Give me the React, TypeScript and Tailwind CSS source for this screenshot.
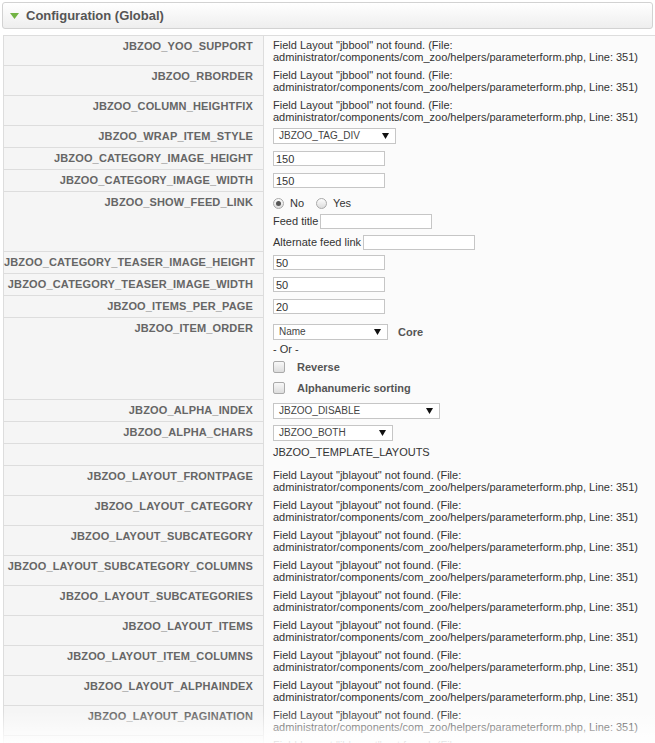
import type { ReactNode } from 'react';

const FILE_LINE = 'administrator/components/com_zoo/helpers/parameterform.php, Line: 351)';

const layoutRows = [
  'JBZOO_LAYOUT_FRONTPAGE',
  'JBZOO_LAYOUT_CATEGORY',
  'JBZOO_LAYOUT_SUBCATEGORY',
  'JBZOO_LAYOUT_SUBCATEGORY_COLUMNS',
  'JBZOO_LAYOUT_SUBCATEGORIES',
  'JBZOO_LAYOUT_ITEMS',
  'JBZOO_LAYOUT_ITEM_COLUMNS',
  'JBZOO_LAYOUT_ALPHAINDEX',
  'JBZOO_LAYOUT_PAGINATION',
  '',
];

function Missing({ field }: { field: string }) {
  return (
    <div className="whitespace-nowrap leading-[12px]">
      <div>Field Layout "{field}" not found. (File:</div>
      <div>{FILE_LINE}</div>
    </div>
  );
}

function Row({
  label,
  pad = 'pt-[3px] pb-[4px]',
  children,
}: {
  label: string;
  pad?: string;
  children?: ReactNode;
}) {
  return (
    <div className="flex">
      <div className="w-[260px] shrink-0 whitespace-nowrap border-r border-b border-[#dddddd] bg-[#f5f5f5] pt-[4px] pr-[10px] text-right text-[11px] font-bold leading-[12px] tracking-[0.15px] text-[#666666]">
        {label}
      </div>
      <div className={`min-w-0 flex-1 bg-[#fbfbfb] pl-[9px] ${pad}`}>{children}</div>
    </div>
  );
}

function Select({ value, width }: { value: string; width: string }) {
  return (
    <div
      className={`flex h-[16px] shrink-0 items-center justify-between border border-[#c6c6c6] bg-white pr-[6px] pl-[5px] text-[10px] leading-[12px] text-[#444444] ${width}`}
    >
      <span>{value}</span>
      <svg width="7" height="6" viewBox="0 0 7 6">
        <path d="M0 0h7L3.5 6z" fill="#111" />
      </svg>
    </div>
  );
}

function TextInput({ value = '', width = 'w-[112px]' }: { value?: string; width?: string }) {
  return (
    <input
      readOnly
      defaultValue={value}
      className={`block h-[15px] border border-[#c6c6c6] bg-white px-[2px] text-[11px] leading-[13px] text-[#333333] outline-none ${width}`}
    />
  );
}

function Radio({ checked, label }: { checked?: boolean; label: string }) {
  return (
    <span className="flex items-center">
      <span className="flex h-[11px] w-[11px] items-center justify-center rounded-full border border-[#a9a9a9] bg-linear-to-b from-[#fdfdfd] to-[#dcdcdc]">
        {checked && <span className="h-[5px] w-[5px] rounded-full bg-[#555555]" />}
      </span>
      <span className="ml-[6px]">{label}</span>
    </span>
  );
}

function Checkbox({ label }: { label: string }) {
  return (
    <div className="flex h-[12px] items-center">
      <span className="h-[12px] w-[12px] rounded-[2px] border border-[#aaaaaa] bg-linear-to-b from-[#f8f8f8] to-[#dddddd]" />
      <span className="ml-[12px] font-bold text-[#555555]">{label}</span>
    </div>
  );
}

export default function App() {
  return (
    <div className="relative h-[743px] w-[655px] overflow-hidden bg-white font-['Liberation_Sans',Arial,sans-serif] text-[11px] text-[#333333]">
      {/* panel header */}
      <div className="mx-[2px] mt-[2px] flex h-[27px] items-center rounded-[3px] border border-[#d2d2d2] bg-linear-to-b from-white to-[#eeeeee] pl-[7px]">
        <svg width="9" height="6" viewBox="0 0 9 6">
          <path d="M0 0h9L4.5 6z" fill="#72b343" />
        </svg>
        <span className="ml-[7px] text-[13px] font-bold text-[#555555]">Configuration (Global)</span>
      </div>

      {/* parameter table */}
      <div className="mt-[6px] ml-[3px] border-t border-l border-[#dddddd]">
        <Row label="JBZOO_YOO_SUPPORT" pad="pt-[3px] pb-[3px]">
          <Missing field="jbbool" />
        </Row>
        <Row label="JBZOO_RBORDER" pad="pt-[3px] pb-[3px]">
          <Missing field="jbbool" />
        </Row>
        <Row label="JBZOO_COLUMN_HEIGHTFIX" pad="pt-[3px] pb-[3px]">
          <Missing field="jbbool" />
        </Row>
        <Row label="JBZOO_WRAP_ITEM_STYLE" pad="pt-[2px] pb-[4px]">
          <Select value="JBZOO_TAG_DIV" width="w-[123px]" />
        </Row>
        <Row label="JBZOO_CATEGORY_IMAGE_HEIGHT">
          <TextInput value="150" />
        </Row>
        <Row label="JBZOO_CATEGORY_IMAGE_WIDTH">
          <TextInput value="150" />
        </Row>
        <Row label="JBZOO_SHOW_FEED_LINK" pad="pt-[3px] pb-[2px]">
          <div className="flex h-[16px] items-center gap-[12px]">
            <Radio checked label="No" />
            <Radio label="Yes" />
          </div>
          <div className="mt-[2px] flex h-[16px] items-center">
            <span>Feed title</span>
            <span className="ml-[2px]">
              <TextInput />
            </span>
          </div>
          <div className="mt-[5px] flex h-[16px] items-center">
            <span>Alternate feed link</span>
            <span className="ml-[2px]">
              <TextInput />
            </span>
          </div>
        </Row>
        <Row label="JBZOO_CATEGORY_TEASER_IMAGE_HEIGHT">
          <TextInput value="50" />
        </Row>
        <Row label="JBZOO_CATEGORY_TEASER_IMAGE_WIDTH">
          <TextInput value="50" />
        </Row>
        <Row label="JBZOO_ITEMS_PER_PAGE">
          <TextInput value="20" />
        </Row>
        <Row label="JBZOO_ITEM_ORDER" pad="pt-[6px] pb-[6px]">
          <div className="flex h-[16px] items-center">
            <Select value="Name" width="w-[115px]" />
            <span className="ml-[10px] font-bold text-[#555555]">Core</span>
          </div>
          <div className="mt-[3px] leading-[12px]">- Or -</div>
          <div className="mt-[6px]">
            <Checkbox label="Reverse" />
          </div>
          <div className="mt-[9px]">
            <Checkbox label="Alphanumeric sorting" />
          </div>
        </Row>
        <Row label="JBZOO_ALPHA_INDEX" pad="pt-[3px] pb-[3px]">
          <Select value="JBZOO_DISABLE" width="w-[167px]" />
        </Row>
        <Row label="JBZOO_ALPHA_CHARS" pad="pt-[3px] pb-[3px]">
          <Select value="JBZOO_BOTH" width="w-[120px]" />
        </Row>
        <Row label="" pad="pt-[2px] pb-[8px]">
          <div className="leading-[12px]">JBZOO_TEMPLATE_LAYOUTS</div>
        </Row>
        {layoutRows.map((label, i) => (
          <Row key={i} label={label} pad="pt-[3px] pb-[3px]">
            <Missing field="jblayout" />
          </Row>
        ))}
      </div>

      {/* fade at the bottom of the scroll area */}
      <div className="pointer-events-none absolute inset-x-0 bottom-0 h-[32px] bg-linear-to-b from-white/0 to-white/90" />
    </div>
  );
}
